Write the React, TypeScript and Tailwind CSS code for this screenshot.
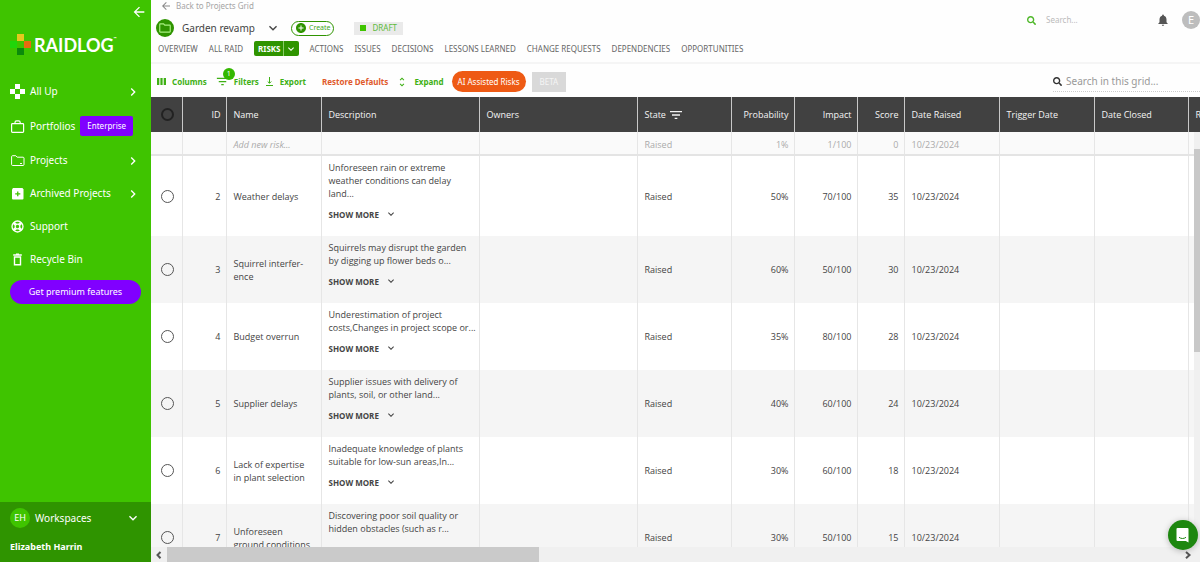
import type { ReactNode } from 'react';
import {
  MdArrowBack,
  MdExpandMore,
  MdChevronRight,
  MdFilterList,
  MdNotifications,
  MdOutlineFolder,
  MdAddCircle,
  MdUnfoldMore,
} from 'react-icons/md';
import { FaSearch } from 'react-icons/fa';

const NAV = [
  { label: 'All Up', icon: 'allup', more: true },
  { label: 'Portfolios', icon: 'portfolio', badge: 'Enterprise' },
  { label: 'Projects', icon: 'projects', more: true },
  { label: 'Archived Projects', icon: 'archive', more: true },
  { label: 'Support', icon: 'support' },
  { label: 'Recycle Bin', icon: 'bin' },
];

const TABS_AFTER = ['ACTIONS', 'ISSUES', 'DECISIONS', 'LESSONS LEARNED', 'CHANGE REQUESTS', 'DEPENDENCIES', 'OPPORTUNITIES'];

const RISKS = [
  { id: 2, name: 'Weather delays', lines: ['Unforeseen rain or extreme', 'weather conditions can delay', 'land...'], probability: '50%', impact: '70/100', score: 35 },
  { id: 3, name: 'Squirrel interfer\u00adence', lines: ['Squirrels may disrupt the garden', 'by digging up flower beds o...'], probability: '60%', impact: '50/100', score: 30 },
  { id: 4, name: 'Budget overrun', lines: ['Underestimation of project', 'costs,Changes in project scope or...'], probability: '35%', impact: '80/100', score: 28 },
  { id: 5, name: 'Supplier delays', lines: ['Supplier issues with delivery of', 'plants, soil, or other land...'], probability: '40%', impact: '60/100', score: 24 },
  { id: 6, name: 'Lack of expertise in plant selection', lines: ['Inadequate knowledge of plants', 'suitable for low-sun areas,In...'], probability: '30%', impact: '60/100', score: 18 },
  { id: 7, name: 'Unforeseen ground conditions', lines: ['Discovering poor soil quality or', 'hidden obstacles (such as r...'], probability: '30%', impact: '50/100', score: 15 },
];

const NavIcon = ({ name }: { name: string }) => {
  const shapes: Record<string, ReactNode> = {
    allup: (
      <g fill="currentColor">
        <rect x="5" y="0" width="5" height="5" />
        <rect x="0" y="5" width="5" height="5" />
        <rect x="10" y="5" width="5" height="5" />
        <rect x="5" y="10" width="5" height="5" />
      </g>
    ),
    portfolio: (
      <g fill="none" stroke="currentColor" strokeWidth="1.2">
        <rect x="1.6" y="4.6" width="12" height="8.8" rx="0.8" />
        <path d="M5 4.6V3.4a1.6 1.6 0 0 1 1.6-1.6h2a1.6 1.6 0 0 1 1.6 1.6v1.2" />
      </g>
    ),
    projects: (
      <path
        d="M1.6 3.6c0-.5.4-.9.9-.9h3.3l1.4 1.5H13c.6 0 1 .4 1 .9v6.5c0 .5-.4.9-1 .9H2.500c-.5 0-.9-.4-.9-.9zM12 10.500h-2"
        fill="none"
        stroke="currentColor"
        strokeWidth="1"
      />
    ),
    archive: (
      <g>
        <path d="M3 2h9.500l1 1.500v9a1 1 0 0 1-1 1H3a1 1 0 0 1-1-1v-9z" fill="currentColor" />
        <path d="M7.100 5.600h1.300v1.600h1.900v1.300H8.400v1.700H7.100V8.500H5.200V7.200h1.900z" fill="#3fc400" />
      </g>
    ),
    support: (
      <g fill="none" stroke="currentColor">
        <circle cx="7.500" cy="7.500" r="5.500" strokeWidth="1.300" />
        <circle cx="7.500" cy="7.500" r="2.300" strokeWidth="1.200" />
        <path d="M3.700 3.700l2.100 2.100M11.300 3.700l-2.100 2.100M3.700 11.300l2.100-2.100M11.300 11.300l-2.100-2.100" strokeWidth="2.800" />
      </g>
    ),
    bin: (
      <g fill="none" stroke="currentColor" strokeWidth="1.400">
        <path d="M3.200 3h8.600M6 2.200h3" />
        <path d="M4.500 5v7.800h6V5z" />
      </g>
    ),
  };
  return (
    <svg viewBox="0 0 15 15" className="size-[15px] shrink-0">
      {shapes[name]}
    </svg>
  );
};

const Logo = () => (
  <div className="flex items-center gap-[3px]">
    <svg viewBox="0 0 21 21" className="size-[21px]">
      <rect x="7" y="0" width="7" height="7" fill="#e6c81e" />
      <rect x="0" y="7" width="7" height="7" fill="#1fd60a" />
      <rect x="14" y="7" width="7" height="7" fill="#e86a10" />
      <rect x="7" y="14" width="7" height="7" fill="#0b8a0b" />
    </svg>
    <span className="flex font-[Lato,sans-serif] text-[18px] leading-5 font-bold">
      RAIDLOG
      <span className="text-[4px] leading-2">™</span>
    </span>
  </div>
);

const Sidebar = () => (
  <aside className="flex w-[151px] shrink-0 flex-col bg-[#3fc400] text-white">
    <button aria-label="Collapse menu" className="mt-1 mr-1 self-end">
      <MdArrowBack className="size-4" />
    </button>
    <div className="mt-3.5 pl-2.5">
      <Logo />
    </div>
    <nav className="mt-5 flex flex-col px-2.5">
      {NAV.map((item) => (
        <a key={item.label} href="#" className="flex min-h-[33px] items-center gap-[5px] text-[10px]">
          <NavIcon name={item.icon} />
          <span>{item.label}</span>
          {item.badge && <span className="my-2 rounded-xs bg-[#8000ff] px-[7px] py-0.5 text-[8px] leading-4">{item.badge}</span>}
          {item.more && <MdChevronRight className="ml-auto size-4" />}
        </a>
      ))}
    </nav>
    <button className="mx-2.5 mt-1 h-6 rounded-full bg-[#8000ff] text-[9px]">Get premium features</button>
    <div className="mt-auto bg-[#2f9400] px-2.5 pt-1.5 pb-2">
      <button className="flex w-full items-center gap-[5px] text-[10px]">
        <span className="flex size-5 items-center justify-center rounded-full bg-[#3fc400] text-[9px]">EH</span>
        Workspaces
        <MdExpandMore className="ml-auto size-4" />
      </button>
      <div className="mt-3 text-[9px] leading-3.5 font-bold">Elizabeth Harrin</div>
    </div>
  </aside>
);

const Header = () => (
  <header className="flex h-16 justify-between border-b-2 border-[#f5f5f5] bg-[#fefefe]">
    <div className="pl-[5px]">
      <a href="#" className="flex h-3 items-center gap-1 pl-1 text-[8px] text-[#a5a5a5]">
        <MdArrowBack className="size-3 text-[#888]" />
        Back to Projects Grid
      </a>
      <div className="mt-1.5 flex h-5 items-center">
        <span className="flex size-[18px] items-center justify-center rounded-full bg-[#2f9400] text-[#a8f080]">
          <MdOutlineFolder className="size-3.5" />
        </span>
        <button className="ml-2 flex items-center gap-2.5 text-[10px] text-[#444]">
          Garden revamp
          <MdExpandMore className="size-4" />
        </button>
        <button className="ml-2.5 flex h-[15px] items-center gap-0.5 rounded-full border border-[#2f9400] px-[3px] text-[7px] text-[#3fa81c]">
          <MdAddCircle className="size-3 text-[#2f9400]" />
          Create
        </button>
        <span className="ml-5 flex h-[13px] items-center gap-1.5 bg-[#eaeaea] px-1.5 text-[8px] text-[#5dbb3a]">
          <span className="size-1.5 bg-[#3fc400]" />
          DRAFT
        </span>
      </div>
      <nav className="mt-[3px] flex items-center gap-[11px] pl-0.5 text-[8px] whitespace-nowrap text-[#666]">
        <a href="#">OVERVIEW</a>
        <a href="#">ALL RAID</a>
        <span className="flex h-[15px] items-center rounded-xs bg-[#2f9400] text-white">
          <a href="#" className="pr-0.5 pl-1 font-bold">RISKS</a>
          <button aria-label="Risk views" className="flex h-full w-4 items-center justify-center border-l border-[#8acb6a]">
            <MdExpandMore className="size-3" />
          </button>
        </span>
        {TABS_AFTER.map((tab) => (
          <a key={tab} href="#">{tab}</a>
        ))}
      </nav>
    </div>
    <div className="flex h-10 items-center">
      <label className="flex items-center gap-2.5">
        <FaSearch className="size-[9px] text-[#4fb82a]" />
        <input aria-label="Search" placeholder="Search..." className="w-[110px] text-[8px] outline-none placeholder:text-[#bbb]" />
      </label>
      <button aria-label="Notifications">
        <MdNotifications className="size-3.5 text-[#555]" />
      </button>
      <span className="ml-3 flex size-[18px] items-center justify-center rounded-full bg-[#bdbdbd] text-[11px] text-white">E</span>
    </div>
  </header>
);

const Toolbar = () => (
  <div className="flex h-[33px] items-center bg-[#fefefe] pt-0.5 pl-1.5 text-[8px] font-bold whitespace-nowrap text-[#3fb015]">
    <button className="flex items-center gap-1.5">
      <svg viewBox="0 0 9 7" className="h-[7px] w-[9px]" fill="currentColor">
        <path d="M0 0h2.300v7H0zM3.400 0h2.200v7H3.400zM6.700 0H9v7H6.700z" />
      </svg>
      Columns
    </button>
    <button className="relative ml-2 flex items-center gap-1">
      <MdFilterList className="size-[15px]" />
      Filters
      <span className="absolute -top-1.5 left-2 flex size-3 items-center justify-center rounded-full bg-[#34b800] text-[7px] font-normal text-white">1</span>
    </button>
    <button className="ml-1.5 flex items-center gap-1.5">
      <svg viewBox="0 0 9 9" className="size-[9px]" fill="none" stroke="currentColor">
        <path d="M4.500 0v6M2.700 4.500l1.800 1.800 1.800-1.800M1 8.500h7" />
      </svg>
      Export
    </button>
    <button className="ml-4 text-[#e0592b]">Restore Defaults</button>
    <button className="ml-2 flex items-center gap-1.5">
      <MdUnfoldMore className="size-3" />
      Expand
    </button>
    <button className="ml-2 h-[21px] rounded-full bg-[#ee5a14] px-1.5 font-normal text-white">AI Assisted Risks</button>
    <span className="ml-1.5 flex h-5 items-center bg-[#d9d9d9] px-2 font-normal text-[#f5f5f5]">BETA</span>
    <label className="ml-auto flex h-5 w-[147px] items-center gap-1 border-b border-dotted border-[#ccc] font-normal">
      <FaSearch className="size-[9px] shrink-0 text-[#333]" />
      <input
        aria-label="Search in this grid"
        placeholder="Search in this grid..."
        className="w-full text-[10px] outline-none placeholder:text-[#999]"
      />
    </label>
  </div>
);

const RiskGrid = () => (
  <div className="relative min-h-0 flex-1 overflow-hidden">
    <table className="w-[1120px] table-fixed font-['Open_Sans',sans-serif] text-[9px] leading-[13px] text-[#444] [&_td]:border-r [&_td]:border-[#e6e6e6] [&_td]:pr-[5px] [&_td]:pl-[7px] [&_th]:border-r [&_th]:border-[#c8c8c8] [&_th]:pr-[5px] [&_th]:pl-[7px] [&_th]:font-normal">
      <colgroup>
        <col className="w-[31px]" />
        <col className="w-11" />
        <col className="w-[95px]" />
        <col className="w-[158px]" />
        <col className="w-[158px]" />
        <col className="w-[94px]" />
        <col className="w-[63px]" />
        <col className="w-[63px]" />
        <col className="w-[47px]" />
        <col className="w-[95px]" />
        <col className="w-[95px]" />
        <col className="w-[94px]" />
        <col />
      </colgroup>
      <thead className="bg-[#414141] text-left text-[#f4f4f4]">
        <tr className="h-[35px]">
          <th>
            <input type="checkbox" aria-label="Select all" className="mx-auto block size-[13px] appearance-none rounded-full border-2 border-[#222]" />
          </th>
          <th className="text-right">ID</th>
          <th>Name</th>
          <th>Description</th>
          <th>Owners</th>
          <th>
            <span className="flex items-center gap-0.5">
              State <MdFilterList className="size-4" />
            </span>
          </th>
          <th className="text-right">Probability</th>
          <th className="text-right">Impact</th>
          <th className="text-right">Score</th>
          <th>Date Raised</th>
          <th>Trigger Date</th>
          <th>Date Closed</th>
          <th>R</th>
        </tr>
      </thead>
      <tbody>
        <tr className="h-[23px] border-b-2 border-[#e4e4e4] bg-[#fafafa] text-[#aaa] [&_td]:pt-0.5">
          <td />
          <td />
          <td className="italic">Add new risk...</td>
          <td />
          <td />
          <td>Raised</td>
          <td className="text-right">1%</td>
          <td className="text-right">1/100</td>
          <td className="text-right">0</td>
          <td>10/23/2024</td>
          <td />
          <td />
          <td />
        </tr>
        {RISKS.map((risk) => (
          <tr key={risk.id} className="even:bg-white odd:bg-[#f5f5f5]">
            <td>
              <input type="checkbox" aria-label={`Select risk ${risk.id}`} className="mx-auto block size-[13px] appearance-none rounded-full border border-[#555]" />
            </td>
            <td className="text-right">{risk.id}</td>
            <td>
              <div className="pr-1">{risk.name}</div>
            </td>
            <td className="pt-[5px] pb-2 whitespace-nowrap">
              {risk.lines.map((line) => (
                <div key={line}>{line}</div>
              ))}
              <button className="flex h-7 items-center gap-1.5 text-[8px] font-bold">
                SHOW MORE <MdExpandMore className="size-3" />
              </button>
            </td>
            <td />
            <td>Raised</td>
            <td className="text-right">{risk.probability}</td>
            <td className="text-right">{risk.impact}</td>
            <td className="text-right">{risk.score}</td>
            <td>10/23/2024</td>
            <td />
            <td />
            <td />
          </tr>
        ))}
      </tbody>
    </table>
    <div className="absolute top-[35px] right-0 bottom-0 w-1.5 bg-[#f0f0f0] pt-[17px]">
      <div className="h-[51%] bg-[#c8c8c8]" />
    </div>
  </div>
);

const HorizontalScroll = () => (
  <div className="flex h-[15px] shrink-0 items-center bg-[#f0f0f0] text-[#555]">
    <svg viewBox="0 0 16 15" className="h-[15px] w-4" fill="none" stroke="currentColor" strokeWidth="2">
      <path d="M9.500 5L6.500 8l3 3.200" />
    </svg>
    <div className="h-full w-[35.5%] bg-[#cacaca]" />
    <svg viewBox="0 0 16 15" className="mr-1 ml-auto h-[15px] w-4" fill="none" stroke="currentColor" strokeWidth="2">
      <path d="M6 5l3.500 3L6 11.200" />
    </svg>
  </div>
);

export default function App() {
  return (
    <div className="flex h-screen overflow-hidden font-['Noto_Sans','Open_Sans',sans-serif]">
      <Sidebar />
      <main className="flex min-w-0 flex-1 flex-col">
        <Header />
        <Toolbar />
        <RiskGrid />
        <HorizontalScroll />
      </main>
      <button
        aria-label="Open chat"
        className="fixed right-0.5 bottom-3 flex size-[30px] items-center justify-center rounded-full bg-[#1d870f] shadow-[0_1px_6px_rgba(0,0,0,0.25)]"
      >
        <svg viewBox="0 0 16 16" className="size-4">
          <path d="M2.500 1h10a1 1 0 0 1 1 1v13.500L10.800 14H2.500a1 1 0 0 1-1-1V2a1 1 0 0 1 1-1z" fill="#fff" />
          <path d="M4 10.300c2 1.600 5 1.600 7 0" fill="none" stroke="#1d870f" />
        </svg>
      </button>
    </div>
  );
}
